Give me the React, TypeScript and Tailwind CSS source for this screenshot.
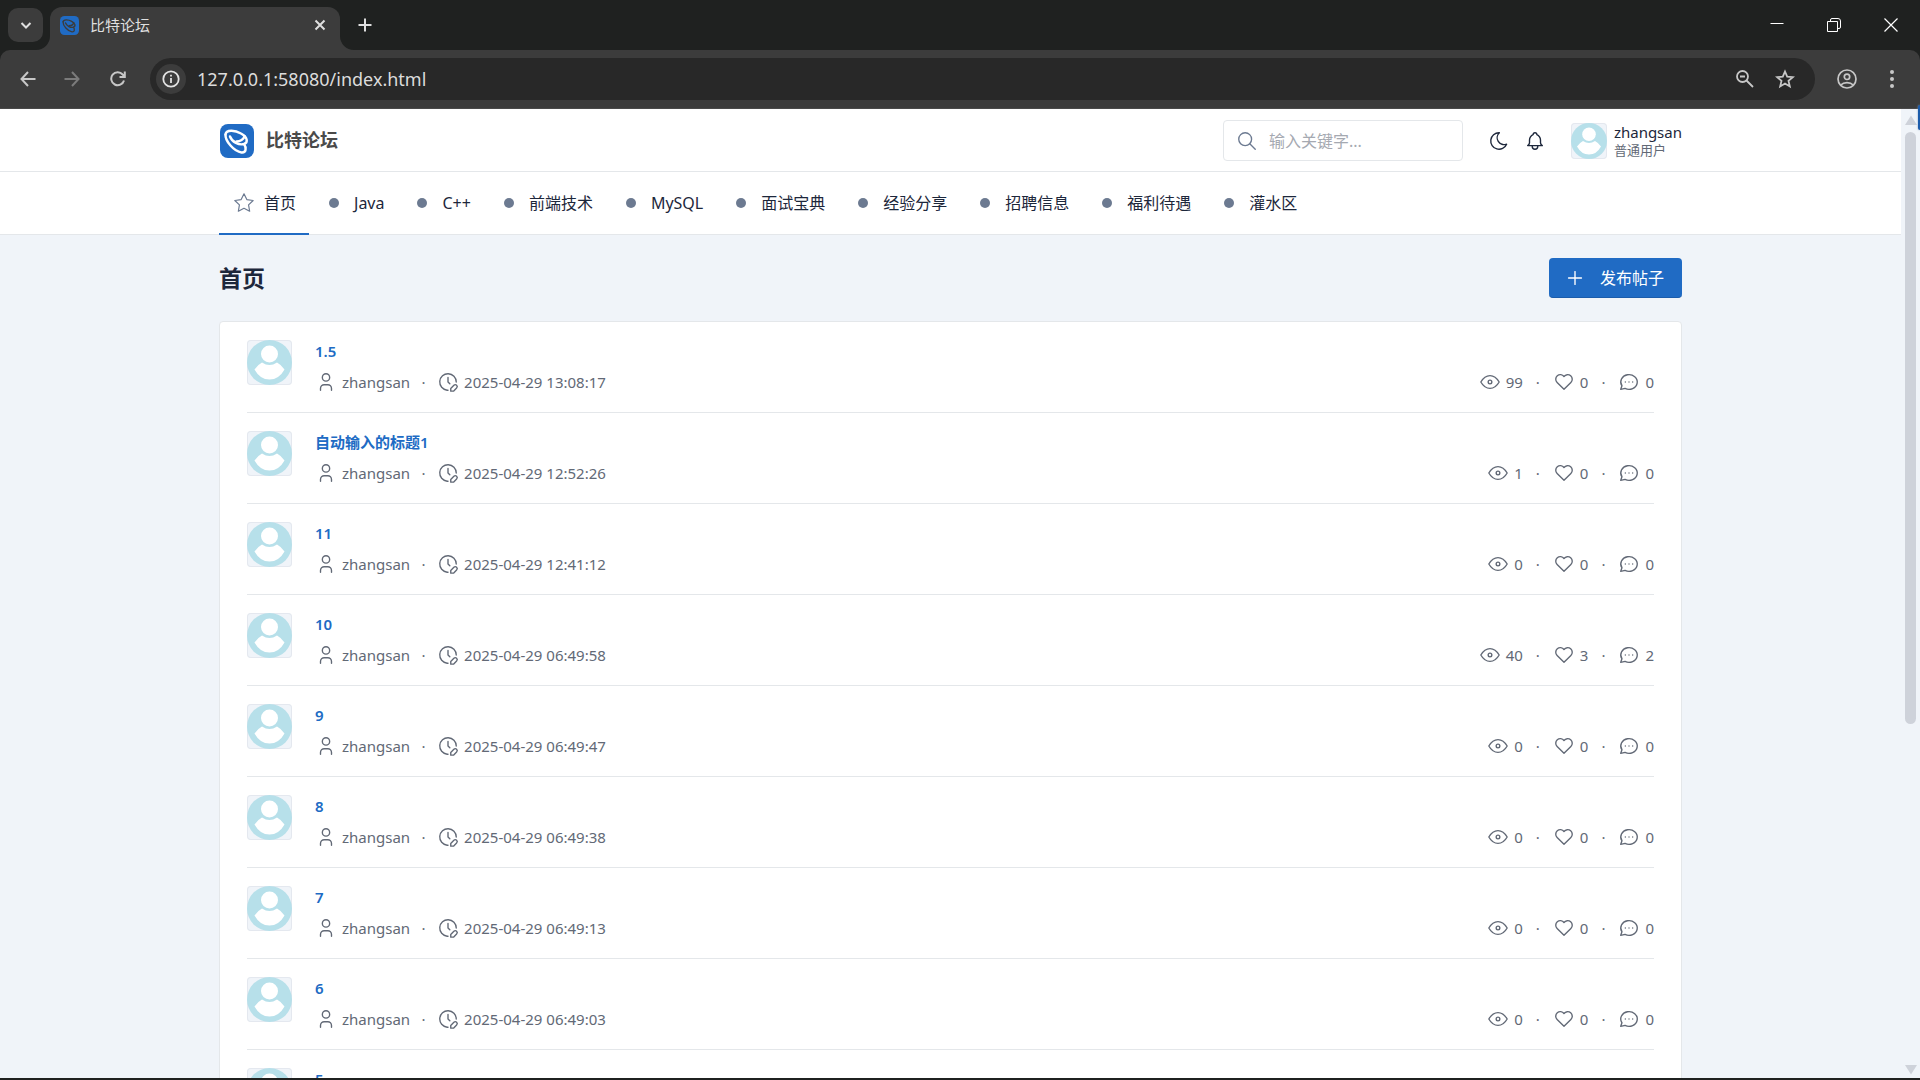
import { useState } from 'react';

const posts = [
  { title: '1.5', time: '2025-04-29 13:08:17', views: 99, likes: 0, replies: 0 },
  { title: '自动输入的标题1', time: '2025-04-29 12:52:26', views: 1, likes: 0, replies: 0 },
  { title: '11', time: '2025-04-29 12:41:12', views: 0, likes: 0, replies: 0 },
  { title: '10', time: '2025-04-29 06:49:58', views: 40, likes: 3, replies: 2 },
  { title: '9', time: '2025-04-29 06:49:47', views: 0, likes: 0, replies: 0 },
  { title: '8', time: '2025-04-29 06:49:38', views: 0, likes: 0, replies: 0 },
  { title: '7', time: '2025-04-29 06:49:13', views: 0, likes: 0, replies: 0 },
  { title: '6', time: '2025-04-29 06:49:03', views: 0, likes: 0, replies: 0 },
  { title: '5', time: '2025-04-29 06:48:54', views: 0, likes: 0, replies: 0 },
];

const boards = ['Java', 'C++', '前端技术', 'MySQL', '面试宝典', '经验分享', '招聘信息', '福利待遇', '灌水区'];

// outline icons, all on a 24x24 grid
const paths = {
  star: ['M12 17.75l-6.172 3.245l1.179 -6.873l-5 -4.867l6.9 -1l3.086 -6.253l3.086 6.253l6.9 1l-5 4.867l1.179 6.873z'],
  search: ['M10 3a7 7 0 1 0 0 14a7 7 0 0 0 0 -14', 'M21 21l-6 -6'],
  moon: ['M12 3c.132 0 .263 0 .393 0a7.5 7.5 0 0 0 7.92 12.446a9 9 0 1 1 -8.313 -12.454z'],
  bell: ['M10 5a2 2 0 1 1 4 0a7 7 0 0 1 4 6v3a4 4 0 0 0 2 3h-16a4 4 0 0 0 2 -3v-3a7 7 0 0 1 4 -6', 'M9 17v1a3 3 0 0 0 6 0v-1'],
  plus: ['M12 5v14', 'M5 12h14'],
  user: ['M8 7a4 4 0 1 0 8 0a4 4 0 0 0 -8 0', 'M6 21v-2a4 4 0 0 1 4 -4h4a4 4 0 0 1 4 4v2'],
  clock: ['M21 12a9 9 0 1 0 -9.972 8.948c.32 .034 .644 .052 .972 .052', 'M12 7v5l2 2', 'M18.42 15.61a2.1 2.1 0 0 1 2.97 2.97l-3.39 3.42h-3v-3l3.42 -3.39z'],
  eye: ['M10 12a2 2 0 1 0 4 0a2 2 0 0 0 -4 0', 'M22 12c-2.667 4.667 -6 7 -10 7s-7.333 -2.333 -10 -7c2.667 -4.667 6 -7 10 -7s7.333 2.333 10 7'],
  heart: ['M19.5 12.572l-7.5 7.428l-7.5 -7.428a5 5 0 1 1 7.5 -6.566a5 5 0 1 1 7.5 6.572'],
  reply: ['M3 20l1.3 -3.9a9 8 0 1 1 3.4 2.9l-4.7 1', 'M12 12v.01', 'M8 12v.01', 'M16 12v.01'],
};

function Icon({ name, className = 'size-[22px]', width = 1.5 }: { name: keyof typeof paths; className?: string; width?: number }) {
  return (
    <svg viewBox="0 0 24 24" fill="none" stroke="currentColor" strokeWidth={width} strokeLinecap="round" strokeLinejoin="round" className={`shrink-0 ${className}`} aria-hidden="true">
      {paths[name].map((d) => <path key={d} d={d} />)}
    </svg>
  );
}

function Logo({ className, stroke }: { className: string; stroke: string }) {
  return (
    <svg viewBox="0 0 34 34" className={`shrink-0 ${className}`} aria-hidden="true">
      <rect width="34" height="34" rx="8" fill="#206bc4" />
      <g fill="none" stroke={stroke} strokeWidth="2.4" strokeLinecap="round">
        <path d="M5.500 10.500C6 5.500 15 6 21 9.500C27.500 13 28.500 18.500 24 20C19 21.500 12 18 10 12.500" />
        <path d="M5.500 10.500C5 17 14 27.500 21.500 28.500C26.500 29 26.500 23.500 24 20" />
        <path d="M16.500 17.500C20 17.500 24 15.500 24.500 12" />
      </g>
    </svg>
  );
}

function Avatar({ className }: { className: string }) {
  return (
    <span className={`shrink-0 overflow-hidden rounded bg-[#f0f4f9] ring-1 ring-inset ring-[#e4e8ef] ${className}`}>
      <svg viewBox="0 0 45 45" className="size-full" aria-hidden="true">
        <circle cx="22.5" cy="22.5" r="22.5" fill="#b7e0ea" />
        <circle cx="22.5" cy="14" r="8.500" fill="#fff" />
        <path d="M7.500 29.500Q11 24.500 15 22.500Q22.500 27.500 30 22.500Q34 24.500 37.500 29.500Q32 39.500 22.500 39.500Q13 39.500 7.500 29.500Z" fill="#fff" />
      </svg>
    </span>
  );
}

function BrowserBar() {
  return (
    <header className="bg-[#1f2120] text-[#dfdfdf]">
      <div className="flex h-[50px] items-end pl-2">
        <button aria-label="搜索标签页" className="mb-2 flex h-[34px] w-[35px] items-center justify-center rounded-[10px] bg-[#3c3c3c]">
          <svg viewBox="0 0 12 12" className="size-3" fill="none" stroke="currentColor" strokeWidth="2"><path d="M1.500 4l4.500 4.500L10.500 4" /></svg>
        </button>
        <div className="relative ml-[7px] flex h-[43px] w-[290px] items-center rounded-t-[12px] bg-[#3c3c3c] pb-[7px] pl-[10px] pr-[13px]">
          <svg viewBox="0 0 14 14" className="absolute -left-[14px] bottom-0 size-[14px]" fill="#3c3c3c"><path d="M14 0v14H0A14 14 0 0 0 14 0z" /></svg>
          <svg viewBox="0 0 14 14" className="absolute -right-[14px] bottom-0 size-[14px]" fill="#3c3c3c"><path d="M0 0v14h14A14 14 0 0 1 0 0z" /></svg>
          <Logo className="size-[19px]" stroke="#3c3c3c" />
          <span className="ml-[11px] flex-1 text-[15px]">比特论坛</span>
          <button aria-label="关闭标签页">
            <svg viewBox="0 0 14 14" className="size-[14px]" fill="none" stroke="currentColor" strokeWidth="2"><path d="M2.500 2.500l9 9M11.500 2.500l-9 9" /></svg>
          </button>
        </div>
        <button aria-label="新标签页" className="mb-[18px] ml-[18px]">
          <svg viewBox="0 0 14 14" className="size-[14px]" fill="none" stroke="currentColor" strokeWidth="2"><path d="M7 0.500v13M0.500 7h13" /></svg>
        </button>
        <div className="mb-[18px] ml-auto mr-[22px] flex gap-[43px] text-white">
          <button aria-label="最小化"><svg viewBox="0 0 14 14" className="size-[14px]" stroke="currentColor"><path d="M0.500 5.500h13" /></svg></button>
          <button aria-label="还原">
            <svg viewBox="0 0 14 14" className="size-[14px]" fill="none" stroke="currentColor"><path d="M.5 3.500h10v10h-10zM3.500 3.500v-1.500q0-1.500 1.500-1.500h6q2.500 0 2.500 2.500v6q0 1.500-1.500 1.500h-1.500" /></svg>
          </button>
          <button aria-label="关闭"><svg viewBox="0 0 14 14" className="size-[14px]" stroke="currentColor" strokeWidth="1.200"><path d="M.5.5l13 13M13.500.5l-13 13" /></svg></button>
        </div>
      </div>
      <div className="flex h-[59px] items-center rounded-t-[10px] border-b border-[#4a4a4a] bg-[#3c3c3c] pl-5 pr-[26px] text-[#c7c7c7]">
        <button aria-label="后退">
          <svg viewBox="0 0 16 16" className="size-4" fill="none" stroke="currentColor" strokeWidth="2"><path d="M15.500 8H1.500M8 1L1.500 8L8 15" /></svg>
        </button>
        <button aria-label="前进" className="ml-7 text-[#7b7b7b]">
          <svg viewBox="0 0 16 16" className="size-4" fill="none" stroke="currentColor" strokeWidth="2"><path d="M.5 8h14M8 1l6.500 7L8 15" /></svg>
        </button>
        <button aria-label="重新加载" className="ml-[30px]">
          <svg viewBox="0 0 16 16" className="size-4" fill="none" stroke="currentColor" strokeWidth="2"><path d="M14 9.500A6.500 6.500 0 1 1 12.700 3.500L14.500 5.500M14.800 0.500V6H9.500" /></svg>
        </button>
        <div className="ml-6 flex h-[42px] flex-1 items-center rounded-full bg-[#282828] pl-[6px] pr-5">
          <span className="flex size-[30px] items-center justify-center rounded-full bg-[#3c3c3c] text-[#e3e3e3]">
            <svg viewBox="0 0 18 18" className="size-[18px]" fill="none" stroke="currentColor" strokeWidth="1.800"><circle cx="9" cy="9" r="7.700" /><path d="M9 8v5M9 4.800v1.800" /></svg>
          </span>
          <input aria-label="地址" defaultValue="127.0.0.1:58080/index.html" className="ml-[11px] min-w-0 flex-1 bg-transparent text-[18px] text-[#dcdcdc] outline-none" />
          <svg viewBox="0 0 18 18" className="size-[18px]" fill="none" stroke="currentColor" strokeWidth="1.800"><circle cx="6.500" cy="6.500" r="5.500" /><path d="M10.500 10.500l6.500 6.500M4 6.500h5" /></svg>
          <button aria-label="收藏" className="ml-[21px]">
            <svg viewBox="0 0 20 20" className="size-5" fill="none" stroke="currentColor" strokeWidth="1.800"><path d="M10 2.500l2.200 5.200 5.600.5-4.300 3.700 1.300 5.500L10 14.500l-4.800 2.900 1.300-5.500L2.200 8.200l5.600-.5z" /></svg>
          </button>
        </div>
        <button aria-label="个人资料" className="ml-[22px]">
          <svg viewBox="0 0 20 20" className="size-5" fill="none" stroke="currentColor" strokeWidth="1.700"><circle cx="10" cy="10" r="9" /><circle cx="10" cy="7.800" r="2.700" /><path d="M3.800 16c3-3.200 9.400-3.200 12.400 0" /></svg>
        </button>
        <button aria-label="菜单" className="ml-[33px]">
          <svg viewBox="0 0 4 18" className="h-[18px] w-1" fill="currentColor"><circle cx="2" cy="2" r="2" /><circle cx="2" cy="9" r="2" /><circle cx="2" cy="16" r="2" /></svg>
        </button>
      </div>
    </header>
  );
}

function Stat({ icon, value }: { icon: keyof typeof paths; value: number }) {
  return (
    <span className="flex items-center gap-[5px]">
      <Icon name={icon} />
      {value}
    </span>
  );
}

export default function App() {
  const [keyword, setKeyword] = useState('');

  return (
    <div className="relative flex h-screen flex-col overflow-hidden border-b-2 border-[#1f2120] bg-[#f0f4f9] font-['Noto_Sans','Noto_Sans_CJK_SC',sans-serif] text-[#1d273b]">
      <BrowserBar />
      {/* edge of a docked desktop widget */}
      <span className="absolute right-0 top-[105px] h-[25px] w-[2px] rounded-l bg-[#1c5cab] shadow-[0_0_2px_#7d9cc4]" aria-hidden="true" />
      <div className="flex min-h-0 flex-1">
        <div className="min-w-0 flex-1 overflow-hidden">
          <header className="border-b border-[#e4e7ea] bg-white">
            <div className="mx-auto flex h-[62px] w-full max-w-[1463px] items-center pt-px">
              <a href="#" className="ml-px flex items-center gap-3 text-[18px] font-bold text-[#4a4a4a]">
                <Logo className="size-[34px]" stroke="#fff" />
                比特论坛
              </a>
              <form className="ml-auto flex h-[41px] w-[240px] items-center rounded border border-[#e4e7ea] px-3">
                <Icon name="search" className="size-[22px] text-[#6c7a91]" />
                <input aria-label="搜索" value={keyword} onChange={(e) => setKeyword(e.target.value)} placeholder="输入关键字..." className="ml-[11px] w-full min-w-0 bg-transparent text-[16px] outline-none placeholder:text-[#a5a9b1]" />
              </form>
              <button aria-label="深色模式" className="ml-[25px]"><Icon name="moon" /></button>
              <button aria-label="通知" className="ml-[14px]"><Icon name="bell" /></button>
              <a href="#" className="ml-[25px] flex items-center gap-[7px]">
                <Avatar className="size-9" />
                <span className="flex flex-col">
                  <span className="text-[15px] leading-[18px]">zhangsan</span>
                  <span className="text-[13px] leading-[18px] text-[#626976]">普通用户</span>
                </span>
              </a>
            </div>
          </header>
          <nav className="border-b border-[#e4e7ea] bg-white">
            <ul className="mx-auto flex h-[62px] w-full max-w-[1463px] text-[16px]">
              <li className="-mb-px flex border-b-2 border-[#206bc4]">
                <a href="#" className="flex items-center gap-[9px] pl-[14px] pr-[13px]">
                  <Icon name="star" className="size-[22px] text-[#6c7a91]" width={1.3} />
                  首页
                </a>
              </li>
              {boards.map((b) => (
                <li key={b} className="flex">
                  <a href="#" className="flex items-center gap-[15px] pl-5 pr-[13px]">
                    <span className="size-[10px] rounded-full bg-[#6c7a91]" />
                    {b}
                  </a>
                </li>
              ))}
            </ul>
          </nav>
          <main className="mx-auto w-full max-w-[1463px]">
            <div className="flex items-center justify-between py-[23px]">
              <h2 className="text-[23px] font-bold leading-[38px]">首页</h2>
              <button className="flex h-10 items-center rounded border-b border-[#1b5cab] bg-[#206bc4] pl-[15px] pr-[18px] text-[16px] text-white">
                <Icon name="plus" className="mr-[14px] size-[22px]" />
                发布帖子
              </button>
            </div>
            <ul className="rounded border border-[#e4e7ea] bg-white px-[27px]">
              {posts.map((p) => (
                <li key={p.title} className="flex border-b border-[#e4e7ea] py-[18px]">
                  <Avatar className="size-[45px]" />
                  <div className="ml-[23px] min-w-0 flex-1">
                    <a href="#" className="block text-[15px] font-semibold leading-[22px] text-[#206bc4]">{p.title}</a>
                    <div className="mt-2 flex h-6 items-center text-[15px] text-[#626976]">
                      <Icon name="user" />
                      <span className="ml-[5px]">zhangsan</span>
                      <span className="w-[27px] text-center">·</span>
                      <Icon name="clock" />
                      <time className="ml-[5px]">{p.time}</time>
                      <div className="ml-auto flex items-center">
                        <Stat icon="eye" value={p.views} />
                        <span className="w-[30px] text-center">·</span>
                        <Stat icon="heart" value={p.likes} />
                        <span className="w-[30px] text-center">·</span>
                        <Stat icon="reply" value={p.replies} />
                      </div>
                    </div>
                  </div>
                </li>
              ))}
            </ul>
          </main>
        </div>
        <div className="flex w-[19px] flex-col items-center justify-between bg-[#f0f4f9] pb-[3px] pt-[6px] text-[#ced2da]" aria-hidden="true">
          <svg viewBox="0 0 12 10" className="h-[10px] w-3" fill="currentColor"><path d="M6 .5L12 10H0z" /></svg>
          <span className="mb-auto mt-[7px] h-[592px] w-[11px] rounded-full bg-[#ced2da]" />
          <svg viewBox="0 0 12 10" className="h-[10px] w-3" fill="currentColor"><path d="M6 9.500L12 0H0z" /></svg>
        </div>
      </div>
    </div>
  );
}
